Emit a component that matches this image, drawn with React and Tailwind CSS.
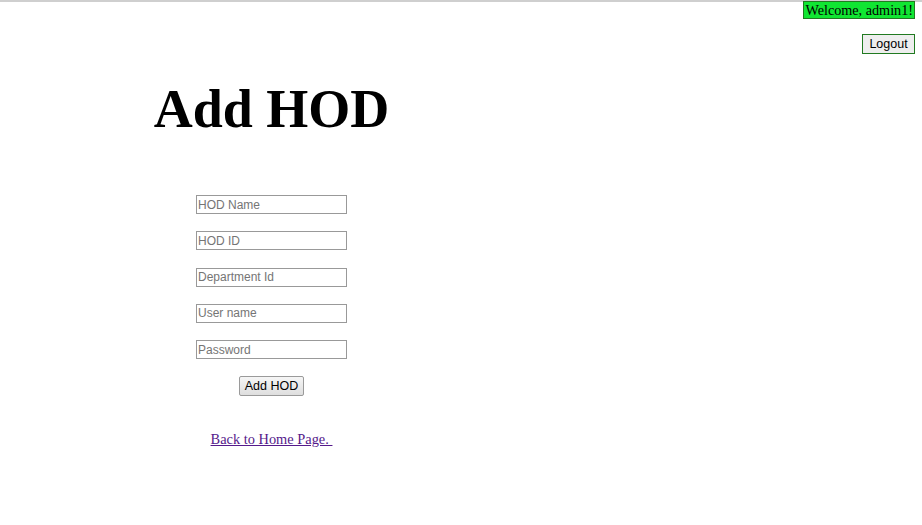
export default function App() {
  const fields = ["HOD Name", "HOD ID", "Department Id", "User name", "Password"];

  return (
    <div className="min-h-[525px] bg-white border-t-2 border-[#cfcfcf] font-['Liberation_Serif',serif] text-black">
      {/* Header */}
      <div className="flex flex-col items-end pr-[7px]">
        <div className="bg-[#10e632] border border-[#217a21] px-px h-[18px] leading-[16px] text-[14.2px] -mt-px">
          Welcome, admin1!
        </div>
        <button className="mt-[15px] h-[20px] w-[53px] border border-[#217a21] bg-[#eeeeee] font-['Liberation_Sans',sans-serif] text-[12.5px] leading-none">
          Logout
        </button>
      </div>

      {/* Form */}
      <div className="w-[543px] text-center">
        <h1 className="mt-[28px] text-[54px] leading-none font-bold">Add HOD</h1>

        <form className="mt-[59px] flex flex-col items-center gap-[17.3px]">
          {fields.map((f) => (
            <input
              key={f}
              type={f === "Password" ? "password" : "text"}
              placeholder={f}
              className="h-[19px] w-[151px] border border-[#999999] px-px font-['Liberation_Sans',sans-serif] text-[12px] placeholder:text-[#757575] outline-none"
            />
          ))}
          <button
            type="button"
            className="h-[20px] w-[65px] border border-[#9a9a9a] rounded-[2px] bg-gradient-to-b from-[#f6f6f6] to-[#dedede] font-['Liberation_Sans',sans-serif] text-[12.5px] leading-none"
          >
            Add HOD
          </button>
        </form>

        <a href="#" className="mt-[33px] inline-block text-[14.4px] text-[#551a8b] underline">
          Back to Home Page.&nbsp;
        </a>
      </div>
    </div>
  );
}
